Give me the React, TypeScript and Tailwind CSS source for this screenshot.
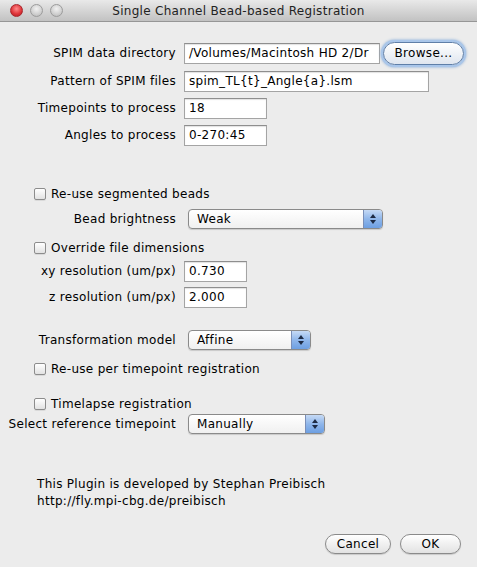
import React from 'react';

const font = { fontFamily: '"DejaVu Sans", "Noto Sans", sans-serif' };

const Label: React.FC<{ text: string }> = ({ text }) => (
  <div className="w-[176px] shrink-0 text-right whitespace-nowrap">{text}</div>
);

const Field: React.FC<{ value: string; w: string }> = ({ value, w }) => (
  <div
    className={`${w} h-[21px] ml-[8px] bg-white border border-[#a4a4a4] border-t-[#8e8e8e] flex items-center pl-[4px] overflow-hidden whitespace-nowrap shadow-[inset_0_1px_1px_rgba(0,0,0,0.12)]`}
  >
    {value}
  </div>
);

const Select: React.FC<{ value: string; w: string }> = ({ value, w }) => (
  <div
    className={`${w} h-[20px] ml-[12px] rounded-[4px] border border-[#8a8a8a] bg-gradient-to-b from-white to-[#f0f0f0] flex items-center overflow-hidden shadow-[0_1px_1px_rgba(0,0,0,0.15)]`}
  >
    <div className="flex-1 pl-[8px] whitespace-nowrap">{value}</div>
    <div className="w-[19px] h-full bg-gradient-to-b from-[#c6daf5] via-[#8fb6ea] to-[#6d9fe2] border-l border-[#7a8fb8] flex flex-col items-center justify-center gap-[2px]">
      <svg width="6" height="4" viewBox="0 0 6 4">
        <path d="M3 0 L6 4 L0 4 Z" fill="#1d2a44" />
      </svg>
      <svg width="6" height="4" viewBox="0 0 6 4">
        <path d="M0 0 L6 0 L3 4 Z" fill="#1d2a44" />
      </svg>
    </div>
  </div>
);

const Check: React.FC<{ text: string }> = ({ text }) => (
  <div className="flex items-center pl-[34px]">
    <div className="w-[12px] h-[12px] rounded-[2px] border border-[#8c8c8c] bg-gradient-to-b from-white to-[#e2e2e2] shadow-[0_1px_0_rgba(0,0,0,0.08)]" />
    <span className="ml-[5px] whitespace-nowrap">{text}</span>
  </div>
);

const Light: React.FC<{ red?: boolean }> = ({ red }) => (
  <div
    className={`w-[13px] h-[13px] rounded-full border ${
      red
        ? 'border-[#a8262b] bg-[radial-gradient(circle_at_50%_35%,#ff8a8a,#e0373c_55%,#b0181e)]'
        : 'border-[#9c9c9c] bg-[radial-gradient(circle_at_50%_35%,#f2f2f2,#cfcfcf_60%,#b5b5b5)]'
    }`}
  />
);

export default function App() {
  return (
    <div
      className="w-[477px] h-[567px] bg-[#ececec] text-[12px] tracking-[0.3px] text-black overflow-hidden"
      style={font}
    >
      <div className="h-[22px] relative flex items-center justify-center bg-gradient-to-b from-[#e9e9e9] to-[#c2c2c2] border-b border-[#969696]">
        <div className="absolute left-[10px] top-[4px] flex gap-[7px]">
          <Light red />
          <Light />
          <Light />
        </div>
        <span className="text-[12px] text-[#222]">Single Channel Bead-based Registration</span>
      </div>

      <div className="flex flex-col">
        <div className="h-[24px] mt-[19px] flex items-center">
          <Label text="SPIM data directory" />
          <Field value="/Volumes/Macintosh HD 2/Dr" w="w-[196px]" />
          <button className="ml-[3px] w-[81px] h-[23px] rounded-full border border-[#5f7fa8] bg-gradient-to-b from-white to-[#dfe6ef] shadow-[0_0_0_2px_#a9c6ea,0_0_3px_2px_#7aa4d6] text-[12px] tracking-[0.3px]">
            Browse...
          </button>
        </div>
        <div className="h-[22px] mt-[5px] flex items-center">
          <Label text="Pattern of SPIM files" />
          <Field value="spim_TL{t}_Angle{a}.lsm" w="w-[245px]" />
        </div>
        <div className="h-[22px] mt-[5px] flex items-center">
          <Label text="Timepoints to process" />
          <Field value="18" w="w-[83px]" />
        </div>
        <div className="h-[22px] mt-[5px] flex items-center">
          <Label text="Angles to process" />
          <Field value="0-270:45" w="w-[83px]" />
        </div>

        <div className="h-[20px] mt-[38px] flex items-center">
          <Check text="Re-use segmented beads" />
        </div>
        <div className="h-[20px] mt-[5px] flex items-center">
          <Label text="Bead brightness" />
          <Select value="Weak" w="w-[195px]" />
        </div>
        <div className="h-[20px] mt-[9px] flex items-center">
          <Check text="Override file dimensions" />
        </div>
        <div className="h-[20px] mt-[3px] flex items-center">
          <Label text="xy resolution (um/px)" />
          <Field value="0.730" w="w-[63px]" />
        </div>
        <div className="h-[20px] mt-[6px] flex items-center">
          <Label text="z resolution (um/px)" />
          <Field value="2.000" w="w-[63px]" />
        </div>

        <div className="h-[20px] mt-[23px] flex items-center">
          <Label text="Transformation model" />
          <Select value="Affine" w="w-[123px]" />
        </div>
        <div className="h-[20px] mt-[9px] flex items-center">
          <Check text="Re-use per timepoint registration" />
        </div>

        <div className="h-[20px] mt-[15px] flex items-center">
          <Check text="Timelapse registration" />
        </div>
        <div className="h-[20px] flex items-center">
          <Label text="Select reference timepoint" />
          <Select value="Manually" w="w-[137px]" />
        </div>

        <div className="mt-[42px] pl-[37px] leading-[17px]">
          <div>This Plugin is developed by Stephan Preibisch</div>
          <div>http://fly.mpi-cbg.de/preibisch</div>
        </div>

        <div className="h-[20px] mt-[24px] flex justify-end pr-[16px] gap-[9px]">
          <button className="w-[66px] h-[20px] rounded-full border border-[#8a8a8a] bg-gradient-to-b from-white to-[#e2e2e2] shadow-[0_1px_1px_rgba(0,0,0,0.15)] text-[12px] tracking-[0.3px]">
            Cancel
          </button>
          <button className="w-[61px] h-[20px] rounded-full border border-[#8a8a8a] bg-gradient-to-b from-white to-[#e2e2e2] shadow-[0_1px_1px_rgba(0,0,0,0.15)] text-[12px] tracking-[0.3px]">
            OK
          </button>
        </div>
      </div>
    </div>
  );
}
